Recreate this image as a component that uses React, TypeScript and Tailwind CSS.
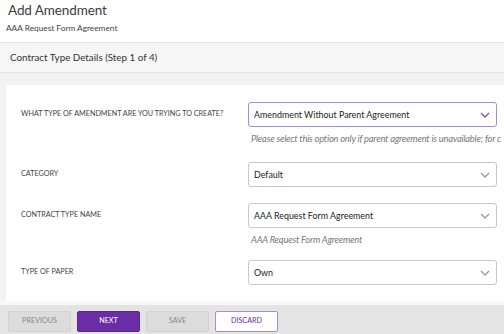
import React from "react";

const font = { fontFamily: "Lato, 'Open Sans', sans-serif" };

function Chevron({ purple }: { purple?: boolean }) {
  return (
    <svg width="10" height="6" viewBox="0 0 10 6" className="shrink-0">
      <path d="M1 1 L5 5 L9 1" fill="none" stroke={purple ? "#7a4fb8" : "#9a9a9a"} strokeWidth="1.3" />
    </svg>
  );
}

function Select({ value, purple }: { value: string; purple?: boolean }) {
  return (
    <div
      className={`h-[25px] w-[249px] rounded-[3px] border flex items-center justify-between pl-[5px] pr-[6px] bg-white ${
        purple ? "border-[#a88bd6]" : "border-[#c8c8c8]"
      }`}
    >
      <span className="text-[8.9px] text-[#222]">{value}</span>
      <Chevron purple={purple} />
    </div>
  );
}

function Row({ label, value, help, purple }: { label: string; value: string; help?: string; purple?: boolean }) {
  return (
    <div className="flex">
      <div className="w-[242px] shrink-0 pl-[15px] h-[25px] flex items-center text-[7.2px] text-[#444] whitespace-nowrap">
        {label}
      </div>
      <div className="flex flex-col">
        <Select value={value} purple={purple} />
        {help && (
          <div className="mt-[6px] pl-[3px] leading-[12px] text-[9.3px] italic text-[#777] whitespace-nowrap tracking-[-0.2px]">{help}</div>
        )}
      </div>
    </div>
  );
}

function Btn({ label, kind }: { label: string; kind: "gray" | "purple" | "outline" }) {
  const cls =
    kind === "purple"
      ? "bg-[#6a2da6] text-white border-[#5a2590]"
      : kind === "outline"
      ? "bg-white text-[#6a2da6] border-[#a88bd6]"
      : "bg-[#dcdcdc] text-[#888] border-[#d2d2d2]";
  return (
    <div className={`w-[63px] h-[21px] rounded-[2px] border flex items-center justify-center text-[7.2px] ${cls}`}>
      {label}
    </div>
  );
}

export default function App() {
  return (
    <div style={font} className="w-[504px] h-[334px] overflow-hidden bg-[#f2f2f2] flex flex-col">
      <div className="bg-white h-[43px] shrink-0 pl-[8px] pt-[1px] border-b border-[#e2e2e2]">
        <div className="text-[13.5px] leading-[18px] text-[#3c3c3c] tracking-[-0.1px]">Add Amendment</div>
        <div className="text-[8.3px] leading-[10px] mt-[4px] text-[#444] -ml-[2px]">AAA Request Form Agreement</div>
      </div>
      <div className="h-[30px] shrink-0 bg-[#f6f6f6] border-b border-[#e4e4e4] flex items-center pl-[10px] text-[9.8px] text-[#333]">
        Contract Type Details (Step 1 of 4)
      </div>
      <div className="flex-1 flex flex-col pt-[12px] pl-[6px]">
        <div className="bg-white h-[216px] shrink-0 flex flex-col pt-[17px] overflow-hidden">
          <Row
            label="WHAT TYPE OF AMENDMENT ARE YOU TRYING TO CREATE?"
            value="Amendment Without Parent Agreement"
            purple
            help="Please select this option only if parent agreement is unavailable; for c"
          />
          <div className="h-[17px] shrink-0" />
          <Row label="CATEGORY" value="Default" />
          <div className="h-[16px] shrink-0" />
          <Row label="CONTRACT TYPE NAME" value="AAA Request Form Agreement" help="AAA Request Form Agreement" />
          <div className="h-[14px] shrink-0" />
          <Row label="TYPE OF PAPER" value="Own" />
        </div>
        <div className="h-[4px] shrink-0 bg-[#f8f8f8] -ml-[6px]" />
        <div className="flex-1 bg-[#e4e4e4] -ml-[6px] flex items-start pt-[6px] gap-[6px] pl-[8px]">
          <Btn label="PREVIOUS" kind="gray" />
          <Btn label="NEXT" kind="purple" />
          <Btn label="SAVE" kind="gray" />
          <Btn label="DISCARD" kind="outline" />
        </div>
      </div>
    </div>
  );
}
